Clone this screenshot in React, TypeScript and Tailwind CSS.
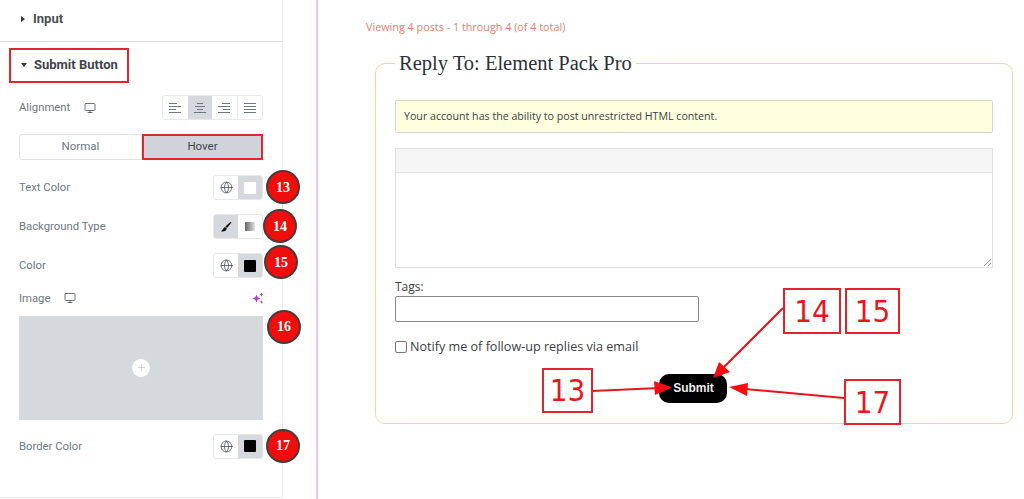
import { Globe, Monitor, Plus } from 'lucide-react';
import type { ReactNode } from 'react';

function Badge({ n, className }: { n: number; className: string }) {
  return (
    <div
      className={`absolute flex h-[34px] w-[34px] items-center justify-center rounded-full border-2 border-[#4a3a3a] bg-[#f20d0d] font-['Liberation_Serif',serif] text-[14px] font-bold text-white ${className}`}
    >
      {n}
    </div>
  );
}

function Callout({ n, className }: { n: number; className: string }) {
  return (
    <div
      className={`absolute z-20 flex items-center justify-center border-2 border-[#e0262c] bg-white font-['DejaVu_Sans_Condensed','Liberation_Sans',sans-serif] text-[31px] leading-none text-[#e8171d] ${className}`}
    >
      {n}
    </div>
  );
}

function AlignIcon({ kind }: { kind: 'left' | 'center' | 'right' | 'justify' }) {
  const rows: [number, number][] =
    kind === 'left'
      ? [[2, 8], [2, 12], [2, 7], [2, 12]]
      : kind === 'center'
        ? [[5, 6], [3, 10], [5, 6], [2, 12]]
        : kind === 'right'
          ? [[6, 8], [2, 12], [7, 7], [2, 12]]
          : [[2, 12], [2, 12], [2, 12], [2, 12]];
  return (
    <svg width="16" height="14" viewBox="0 0 16 14" fill="none" stroke="#6d7882" strokeWidth="1">
      {rows.map(([x, w], i) => (
        <line key={i} x1={x} x2={x + w} y1={2.5 + i * 3} y2={2.5 + i * 3} />
      ))}
    </svg>
  );
}

function ColorControl({ swatch }: { swatch: string }) {
  return (
    <div className="flex h-[25px] w-[50px] overflow-hidden rounded-[3px] border border-[#e6e8ea] bg-white">
      <div className="flex flex-1 items-center justify-center">
        <Globe size={13} strokeWidth={1.5} className="text-[#4a535a]" />
      </div>
      <div className="flex flex-1 items-center justify-center bg-[#d5d8dc]">
        <div className={`h-[12px] w-[12px] rounded-[1px] ${swatch}`} />
      </div>
    </div>
  );
}

function Row({ label, icon, children, className }: { label: string; icon?: boolean; children?: ReactNode; className: string }) {
  return (
    <div className={`relative flex items-center justify-between pl-[19px] pr-[19px] ${className}`}>
      <div className="flex items-center gap-[14px] pt-[2px] text-[11.3px] text-[#6d7882]">
        <span>{label}</span>
        {icon && <Monitor size={12} strokeWidth={1.5} className="mb-[2px] text-[#3f444b]" />}
      </div>
      {children}
    </div>
  );
}

export default function App() {
  return (
    <div className="relative flex h-[499px] w-[1024px] overflow-hidden bg-white font-['Roboto',sans-serif]">
      <aside className="h-[498px] w-[283px] shrink-0 border-r border-b border-[#e8e9ea]">
        <div className="flex h-[42px] items-center gap-[8px] border-b border-[#dfe1e3] pl-[21px] pb-[4px] text-[13px] font-bold text-[#4a5057]">
          <span className="h-0 w-0 border-y-[3.5px] border-l-[4px] border-y-transparent border-l-[#333]" />
          Input
        </div>

        <div className="ml-[9px] mt-[6px] flex h-[35px] w-[120px] items-center gap-[7px] border-2 border-[#dc2a30] pb-[2px] pl-[10px] text-[13px] font-bold text-[#3f444b]">
          <span className="h-0 w-0 border-x-[3.5px] border-t-[4px] border-x-transparent border-t-[#333]" />
          Submit Button
        </div>

        <Row label="Alignment" icon className="mt-[12px]">
          <div className="flex h-[25px] w-[101px] overflow-hidden rounded-[3px] border border-[#e6e8ea] bg-white">
            <div className="flex flex-1 items-center justify-center"><AlignIcon kind="left" /></div>
            <div className="flex flex-1 items-center justify-center bg-[#d5d8dc]"><AlignIcon kind="center" /></div>
            <div className="flex flex-1 items-center justify-center border-r border-[#e6e8ea]"><AlignIcon kind="right" /></div>
            <div className="flex flex-1 items-center justify-center"><AlignIcon kind="justify" /></div>
          </div>
        </Row>

        <div className="ml-[19px] mt-[14px] flex h-[26px] w-[244px] text-[11.5px]">
          <div className="flex w-[123px] items-center justify-center rounded-l-[3px] border border-[#e0e2e4] text-[#6d7882]">
            Normal
          </div>
          <div className="flex w-[121px] items-center justify-center border-2 border-[#dc2a30] bg-[#d0d3d8] text-[#3f444b]">
            Hover
          </div>
        </div>

        <Row label="Text Color" className="mt-[15px]">
          <ColorControl swatch="bg-white" />
          <Badge n={13} className="left-[266px] top-[-5px]" />
        </Row>

        <Row label="Background Type" className="mt-[14px]">
          <div className="flex h-[25px] w-[50px] overflow-hidden rounded-[3px] border border-[#e6e8ea] bg-white">
            <div className="flex flex-1 items-center justify-center bg-[#d5d8dc]">
              <svg width="12" height="12" viewBox="0 0 12 12" fill="#111">
                <path d="M11.5 1.5 7 7 5.4 5.6 10.6.8ZM5 6 6.8 7.6C6.4 10 3.6 11.2.8 10.2 2.6 9.8 3 6.8 5 6Z" />
              </svg>
            </div>
            <div className="flex flex-1 items-center justify-center">
              <div className="h-[9px] w-[10px] bg-gradient-to-r from-[#666] to-[#e4e4e4]" />
            </div>
          </div>
          <Badge n={14} className="left-[263px] top-[-5px]" />
        </Row>

        <Row label="Color" className="mt-[14px]">
          <ColorControl swatch="bg-black" />
          <Badge n={15} className="left-[264px] top-[-8px]" />
        </Row>

        <Row label="Image" icon className="mt-[11px]">
          <svg width="12" height="12" viewBox="0 0 12 12" fill="#b13fd0" className="mr-[-1px]">
            <path d="M4.5 2.5 5.7 5.3 8.5 6.5 5.7 7.7 4.5 10.5 3.3 7.7.5 6.5 3.3 5.3ZM9.5 0.5 10.2 2 11.5 2.6 10.2 3.3 9.5 4.7 8.8 3.3 7.5 2.6 8.8 2ZM9.5 8.3 10.1 9.4 11.2 10 10.1 10.6 9.5 11.7 8.9 10.6 7.8 10 8.9 9.4Z" />
          </svg>
        </Row>

        <div className="relative ml-[19px] mt-[8px] flex h-[104px] w-[244px] items-center justify-center bg-[#d5d8dc]">
          <div className="flex h-[18px] w-[18px] items-center justify-center rounded-full bg-white">
            <Plus size={11} strokeWidth={1.5} className="text-[#c2c6ca]" />
          </div>
          <Badge n={16} className="left-[248px] top-[-6px]" />
        </div>

        <Row label="Border Color" className="mt-[14px]">
          <ColorControl swatch="bg-black" />
          <Badge n={17} className="left-[266px] top-[-5px]" />
        </Row>
      </aside>

      <div className="ml-[33px] h-full w-[2px] shrink-0 bg-[#eec4f2]" />

      <main className="flex-1 pl-[48px]">
        <p className="pt-[20px] font-['Open_Sans',sans-serif] text-[10.8px] leading-[14px] text-[#e2806e]">
          Viewing 4 posts - 1 through 4 (of 4 total)
        </p>

        <fieldset className="ml-[9px] mt-[16px] h-[374px] w-[637px] rounded-[10px] border border-[#f5d49a] px-[19px] font-['Open_Sans',sans-serif]">
          <legend className="px-[4px] font-['Liberation_Serif',serif] text-[20.5px] leading-[26px] text-[#2b3138]">
            Reply To: Element Pack Pro
          </legend>

          <div className="mt-[24px] flex h-[33px] w-[598px] items-center rounded-[2px] border border-[#d5d6c8] bg-[#ffffe0] pl-[8px] text-[10.65px] text-[#3a3f44]">
            Your account has the ability to post unrestricted HTML content.
          </div>

          <div className="mt-[15px] h-[120px] w-[598px] border border-[#e0e0e0]">
            <div className="h-[24px] border-b border-[#e0e0e0] bg-[#f5f5f5]" />
            <div className="relative h-[94px]">
              <svg width="9" height="9" viewBox="0 0 9 9" stroke="#999" className="absolute bottom-0 right-0">
                <path d="M1 8 8 1M5 8 8 5" />
              </svg>
            </div>
          </div>

          <label className="mt-[11px] block text-[12px] leading-[16px] text-[#3a3f44]">Tags:</label>
          <div className="mt-[1px] h-[26px] w-[304px] rounded-[2px] border border-[#8a8a8a]" />

          <div className="mt-[16px] flex items-center gap-[3px] text-[12.6px] text-[#3a4044]">
            <span className="h-[12px] w-[12px] rounded-[2px] border border-[#767676]" />
            Notify me of follow-up replies via email
          </div>

          <div className="mt-[17px] flex justify-center pr-[3px]">
            <div className="flex h-[29px] w-[68px] items-center justify-center rounded-[10px] bg-black pl-[2px] font-['Liberation_Sans',sans-serif] text-[12px] font-bold text-[#eee]">
              Submit
            </div>
          </div>
        </fieldset>
      </main>

      <Callout n={13} className="left-[542px] top-[368px] h-[45px] w-[51px]" />
      <Callout n={14} className="left-[783px] top-[288px] h-[46px] w-[58px]" />
      <Callout n={15} className="left-[845px] top-[288px] h-[46px] w-[55px]" />
      <Callout n={17} className="left-[844px] top-[379px] h-[46px] w-[57px]" />

      <svg width="1024" height="499" viewBox="0 0 1024 499" className="pointer-events-none absolute left-0 top-0 z-10">
        <g stroke="#e8141c" strokeWidth="2" fill="none">
          <line x1="592" y1="391" x2="660" y2="388" />
          <line x1="783" y1="308" x2="722" y2="369" />
          <line x1="844" y1="398" x2="745" y2="389" />
        </g>
        <g fill="#fb0a14">
          <polygon points="672,387.5 654,381 655,395" />
          <polygon points="713,378 719,362 730,372" />
          <polygon points="729,387 748,383 747,396" />
        </g>
      </svg>
    </div>
  );
}
